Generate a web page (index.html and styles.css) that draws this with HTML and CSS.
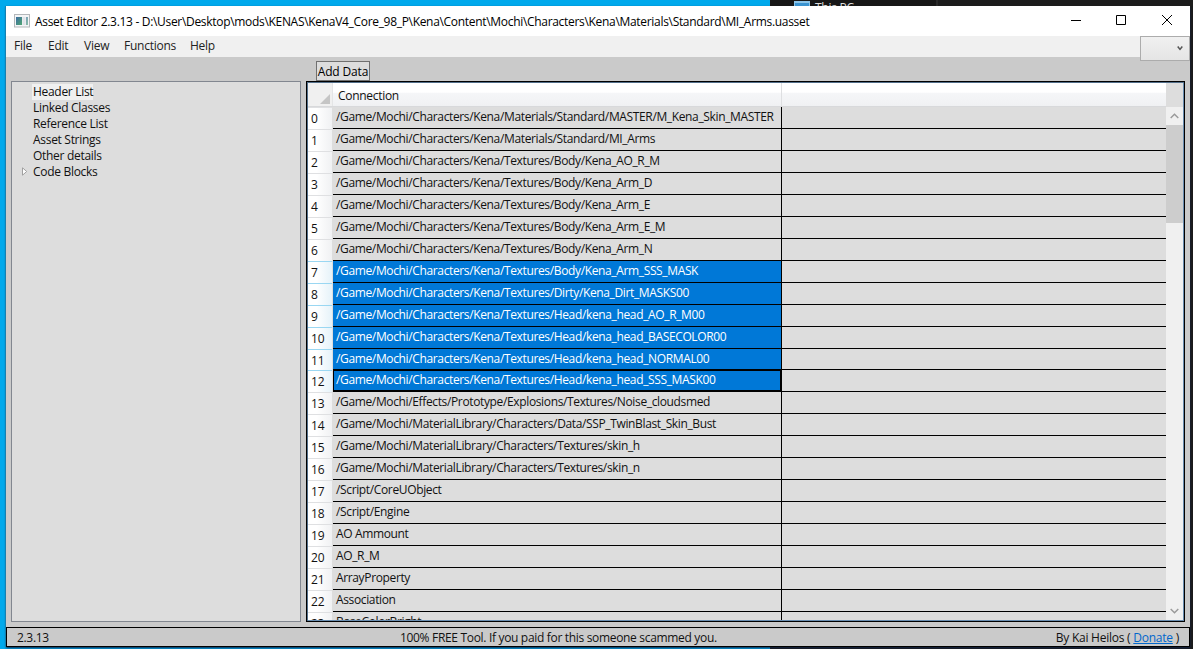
FILE: index.html
```
<!DOCTYPE html>
<html lang="en">
<head>
<meta charset="utf-8">
<title>Asset Editor</title>
<link rel="stylesheet" href="styles.css">
</head>
<body>
<div class="desktop">
  <div class="behind">
    <svg class="pc-icon" width="16" height="6" viewBox="0 0 16 6"><rect width="16" height="6" fill="#8cc4e8"/><rect x="1" y="2" width="14" height="4" fill="#3a93d0"/></svg>
    <span class="pc-label">This PC</span>
  </div>
  <div class="window">
    <header class="titlebar">
      <svg class="app-icon" width="16" height="14" viewBox="0 0 16 14"><defs><linearGradient id="g" x1="0" y1="0" x2="1" y2="1"><stop offset="0" stop-color="#3c6ca0"/><stop offset="1" stop-color="#4fa773"/></linearGradient></defs><rect x=".5" y=".5" width="15" height="12.5" fill="#f4f5f6" stroke="#b3b7ba"/><rect x="2" y="3" width="6" height="8" fill="url(#g)"/><rect x="8.5" y="3" width="3" height="8" fill="#dfe4e8"/><rect x="12" y="3" width="2" height="8" fill="url(#g)" opacity=".65"/></svg>
      <span class="title">Asset Editor 2.3.13 - D:\User\Desktop\mods\KENAS\KenaV4_Core_98_P\Kena\Content\Mochi\Characters\Kena\Materials\Standard\MI_Arms.uasset</span>
      <svg class="controls" width="104" height="12" viewBox="0 0 104 12" fill="none" stroke="#000"><path d="M0 6.5h10M45.5 1.5h9v9h-9zM91 1l10 10M101 1L91 11"/></svg>
    </header>
    <nav class="menu">
      <span class="m-file">File</span><span class="m-edit">Edit</span><span class="m-view">View</span><span class="m-fn">Functions</span><span class="m-help">Help</span>
      <div class="combo"><svg width="6" height="5" viewBox="0 0 6 5"><path d="M.7 .5L3 3.4 5.3 .5" fill="none" stroke="#555" stroke-width="1.5"/></svg></div>
    </nav>
    <div class="toolbar"><button class="add">Add Data</button></div>
    <main class="panes">
      <ul class="tree">
        <li><span class="picked">Header List</span></li>
        <li><span>Linked Classes</span></li>
        <li><span>Reference List</span></li>
        <li><span>Asset Strings</span></li>
        <li><span>Other details</span></li>
        <li><svg class="expander" width="6" height="9" viewBox="0 0 6 9"><path d="M.5 .8v7.4L4.7 4.5z" fill="#fff" stroke="#a0a0a0"/></svg><span>Code Blocks</span></li>
      </ul>
      <section class="grid">
        <div class="table">
          <div class="head"><div class="corner"><svg width="10" height="10" viewBox="0 0 10 10"><path d="M10 0v10H0z" fill="#c5c5c5"/></svg></div><div class="colname">Connection</div><div class="rest"></div></div>
          <div class="rows" id="rows"></div>
        </div>
        <div class="scroll">
          <div class="scroll-gap"></div>
          <div class="arrow"><svg width="9" height="6" viewBox="0 0 9 6"><path d="M.7 5L4.5 1.2 8.3 5" fill="none" stroke="#999" stroke-width="1.4"/></svg></div>
          <div class="thumb"></div>
          <div class="arrow down"><svg width="9" height="6" viewBox="0 0 9 6"><path d="M.7 1L4.5 4.8 8.3 1" fill="none" stroke="#999" stroke-width="1.4"/></svg></div>
        </div>
      </section>
    </main>
    <footer class="status"><span class="ver">2.3.13</span><span class="note">100% FREE Tool. If you paid for this someone scammed you.</span><span class="by">By Kai Heilos ( <a>Donate</a> )</span></footer>
  </div>
</div>
<script src="rows.js"></script>
</body>
</html>
```
FILE: styles.css
```
* { box-sizing: border-box; }
body { margin: 0; font: 12px/16px "Segoe UI", "Open Sans", "Noto Sans", sans-serif; color: #111; letter-spacing: -0.25px; white-space: nowrap; }
svg { display: block; flex: none; }
.desktop { position: relative; width: 1193px; height: 649px; padding: 6px 3px 2px 6px; overflow: hidden; background: linear-gradient(90deg, #00a9ec 0 770px, #1b1b1b 770px); }
.behind { position: absolute; left: 770px; top: 0; width: 423px; height: 6px; overflow: hidden; display: flex; padding-left: 24px; background: linear-gradient(90deg, #171717 0 166px, #292929 166px 168px, #1c1c1c 168px); }
.pc-icon { margin-top: 1px; }
.pc-label { color: #ddd; margin: 0 0 0 5px; }
.window { width: 1184px; height: 641px; display: flex; flex-direction: column; background: #cacaca; box-shadow: -1px 0 #1580b0, 0 1px 2px #124; }
.titlebar { height: 30px; flex: none; display: flex; align-items: center; background: #fff; padding: 0 16px 0 8px; color: #000; }
.app-icon { margin-right: 5px; margin-top: -1px; }
.title { letter-spacing: -0.31px; padding-top: 1px; }
.controls { margin-left: auto; margin-top: -2px; margin-right: -1px; }
.menu { height: 21px; flex: none; display: flex; background: #f0f0f0; padding: 2px 0 0 8px; color: #222; }
.m-file { width: 34px; } .m-edit { width: 36px; } .m-view { width: 40px; } .m-fn { width: 66px; }
.combo { width: 50px; height: 25px; flex: none; margin: -2px 0 0 auto; border: 1px solid #acacac; background: linear-gradient(#f0f0f0, #e5e5e5); display: flex; align-items: center; justify-content: flex-end; padding-right: 6px; }
.toolbar { height: 24px; flex: none; padding: 4px 0 0 310px; }
.add { display: block; width: 54px; height: 20px; padding: 1px 0 0; border: 1px solid #707070; background: #ddd; font: inherit; letter-spacing: -0.15px; color: #000; line-height: 18px; }
.panes { height: 541px; flex: none; display: flex; gap: 5px; padding: 0 5px; }
.tree { width: 290px; margin: 0; padding: 2px 0 0 21px; list-style: none; border: 1px solid #828790; background: #ddd; letter-spacing: -0.3px; }
.tree li { height: 16px; display: flex; }
.picked { background: #f0f0f0; margin-left: -1px; padding-left: 1px; }
.expander { margin: 3px 5px 0 -11px; }
.grid { width: 879px; display: flex; border: 1px solid #000; box-shadow: inset 1px 1px #536f8a, inset -1px -1px #688caf; background: #ddd; padding: 1px; }
.table { width: 859px; height: 537px; overflow: hidden; }
.head { height: 24px; display: flex; background: linear-gradient(#fff 0 40%, #f5f6f8 45%, #f0f1f3); border-bottom: 1px solid #d8d9db; }
.corner { width: 25px; padding: 11px 0 0 12px; border-right: 1px solid #e4e5e6; background: #f0f0f0; }
.colname { width: 449px; padding: 5px 0 0 5px; border-right: 1px solid #dedfe1; letter-spacing: -0.3px; }
.row { height: 22px; display: flex; }
.row.short { height: 21px; }
.num { width: 25px; padding: 4px 0 0 3px; background: linear-gradient(90deg, #fff 0 35%, #f0f1f3); box-shadow: inset 0 1px #dfe0e2; border-right: 1px solid #ddd; letter-spacing: -0.1px; line-height: 16px; }
.cell { width: 449px; padding: 2px 0 0 3px; border-right: 1px solid #000; border-bottom: 1px solid #000; letter-spacing: -0.36px; }
.empty { flex: 1; border-bottom: 1px solid #000; }
.selected .num { background: linear-gradient(90deg, #fff 0 35%, #e5f2f9); box-shadow: inset 0 1px #9ad7f2; }
.selected .cell { background: #0078d7; color: #fff; }
.focus .cell { box-shadow: inset 1px 1px #000, inset -1px -1px #000; }
.scroll { width: 17px; display: flex; flex-direction: column; background: #f0f0f0; }
.scroll-gap { height: 24px; background: #ddd; }
.arrow { height: 18px; display: flex; align-items: center; justify-content: center; }
.thumb { height: 98px; background: #cdcdcd; }
.down { margin-top: auto; }
.status { height: 20px; flex: none; margin-top: 5px; display: grid; grid-template-columns: 383px 1fr auto; align-items: center; border: 1px solid #000; background: #cacaca; padding: 2px 10px 0; letter-spacing: -0.32px; }
.by { letter-spacing: -0.24px; }
.status a { color: #0066cc; text-decoration: underline; }
```
FILE: rows.js
```
const names = [
  "/Game/Mochi/Characters/Kena/Materials/Standard/MASTER/M_Kena_Skin_MASTER",
  "/Game/Mochi/Characters/Kena/Materials/Standard/MI_Arms",
  "/Game/Mochi/Characters/Kena/Textures/Body/Kena_AO_R_M",
  "/Game/Mochi/Characters/Kena/Textures/Body/Kena_Arm_D",
  "/Game/Mochi/Characters/Kena/Textures/Body/Kena_Arm_E",
  "/Game/Mochi/Characters/Kena/Textures/Body/Kena_Arm_E_M",
  "/Game/Mochi/Characters/Kena/Textures/Body/Kena_Arm_N",
  "/Game/Mochi/Characters/Kena/Textures/Body/Kena_Arm_SSS_MASK",
  "/Game/Mochi/Characters/Kena/Textures/Dirty/Kena_Dirt_MASKS00",
  "/Game/Mochi/Characters/Kena/Textures/Head/kena_head_AO_R_M00",
  "/Game/Mochi/Characters/Kena/Textures/Head/kena_head_BASECOLOR00",
  "/Game/Mochi/Characters/Kena/Textures/Head/kena_head_NORMAL00",
  "/Game/Mochi/Characters/Kena/Textures/Head/kena_head_SSS_MASK00",
  "/Game/Mochi/Effects/Prototype/Explosions/Textures/Noise_cloudsmed",
  "/Game/Mochi/MaterialLibrary/Characters/Data/SSP_TwinBlast_Skin_Bust",
  "/Game/Mochi/MaterialLibrary/Characters/Textures/skin_h",
  "/Game/Mochi/MaterialLibrary/Characters/Textures/skin_n",
  "/Script/CoreUObject", "/Script/Engine", "AO Ammount", "AO_R_M",
  "ArrayProperty", "Association", "BaseColorBright"
];
document.getElementById("rows").innerHTML = names.map((name, i) => {
  const cls = ["row"];
  if (i >= 7 && i <= 12) cls.push("selected");
  if (i === 11) cls.push("short");
  if (i === 12) cls.push("focus");
  return `<div class="${cls.join(" ")}"><div class="num">${i}</div><div class="cell">${name}</div><div class="empty"></div></div>`;
}).join("");
```
